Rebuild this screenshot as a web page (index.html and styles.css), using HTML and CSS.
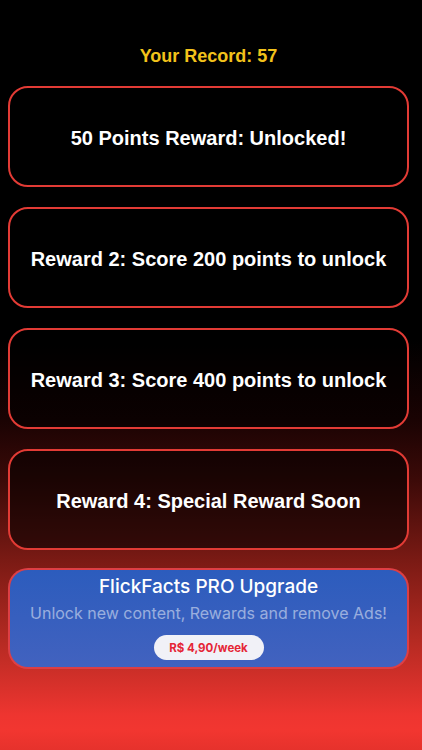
FILE: index.html
```html
<!DOCTYPE html>
<html lang="en">
<head>
<meta charset="utf-8">
<title>Rewards</title>
<link rel="stylesheet" href="styles.css">
</head>
<body>
<main class="screen">
  <h1 class="record">Your Record: 57</h1>
  <div class="rewards">
    <div class="reward">50 Points Reward: Unlocked!</div>
    <div class="reward">Reward 2: Score 200 points to unlock</div>
    <div class="reward">Reward 3: Score 400 points to unlock</div>
    <div class="reward">Reward 4: Special Reward Soon</div>
    <div class="pro">
      <div class="pro-title">FlickFacts PRO Upgrade</div>
      <div class="pro-sub">Unlock new content, Rewards and remove Ads!</div>
      <button class="price">R$ 4,90/week</button>
    </div>
  </div>
</main>
</body>
</html>
```
FILE: styles.css
```css
html, body {
  margin: 0;
  padding: 0;
}
body {
  width: 422px;
  height: 750px;
  overflow: hidden;
  background: linear-gradient(to bottom,
    #000 0px,
    #000 340px,
    #1a0303 420px,
    #3c0a08 480px,
    #7a1a14 560px,
    #b42a22 640px,
    #ee3530 715px,
    #f23630 730px,
    #e6322c 750px);
  font-family: "Liberation Sans", Arial, sans-serif;
}
.screen {
  display: flex;
  flex-direction: column;
  align-items: stretch;
  padding: 46px 13px 0 8px;
}
.record {
  margin: 0 0 19px 0;
  text-align: center;
  color: #f2c21b;
  font-size: 18px;
  font-weight: bold;
  line-height: 21px;
}
.rewards {
  display: flex;
  flex-direction: column;
  gap: 20px;
}
.reward {
  height: 101px;
  box-sizing: border-box;
  padding-top: 3px;
  border: 2px solid #e23b35;
  border-radius: 20px;
  background: rgba(0, 0, 0, 0.55);
  display: flex;
  align-items: center;
  justify-content: center;
  color: #fff;
  font-size: 20px;
  font-weight: bold;
}
.pro {
  margin-top: -2px;
  height: 101px;
  box-sizing: border-box;
  border: 2px solid rgba(240, 60, 55, 0.9);
  border-radius: 20px;
  background: linear-gradient(to bottom, #2c5cbd, #4262bf);
  display: flex;
  flex-direction: column;
  align-items: center;
  padding-top: 5px;
  font-family: Inter, "Noto Sans", sans-serif;
}
.pro-title {
  color: #fff;
  font-size: 19px;
  font-weight: 500;
  line-height: 24px;
}
.pro-sub {
  margin-top: 3px;
  color: rgba(255, 255, 255, 0.5);
  font-size: 16px;
  line-height: 22px;
}
.price {
  margin-top: 11px;
  width: 110px;
  height: 25px;
  border: none;
  border-radius: 13px;
  background: #f1f1f7;
  color: #e52536;
  font-family: Inter, "Noto Sans", sans-serif;
  font-size: 11.5px;
  font-weight: 700;
  padding: 0;
}
```
